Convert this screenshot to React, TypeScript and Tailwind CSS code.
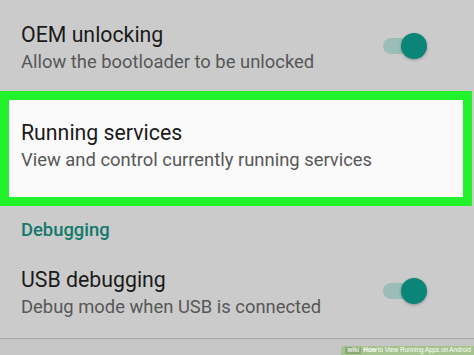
import React from "react";

function Toggle() {
  return (
    <div className="relative h-[26px] w-[45px] shrink-0">
      <div className="absolute left-0 top-[5px] h-[16px] w-[36px] rounded-full bg-[#9bbdb7]" />
      <div className="absolute left-[18px] top-0 h-[26px] w-[26px] rounded-full bg-[#0b8577] shadow-[0_1px_3px_rgba(0,0,0,0.3)]" />
    </div>
  );
}

function Row({ title, subtitle, toggle }: { title: string; subtitle: string; toggle?: boolean }) {
  return (
    <div className="flex items-start justify-between">
      <div className="flex flex-col gap-[1px]">
        <p className="text-[21.3px] leading-[26px] text-[#1b1b1b]">{title}</p>
        <p className="text-[18.4px] leading-[26px] text-[#575757]">{subtitle}</p>
      </div>
      {toggle && <div className="mr-[46px] mt-[11px]"><Toggle /></div>}
    </div>
  );
}

export default function App() {
  return (
    <div
      className="flex h-[355px] w-[474px] flex-col overflow-hidden bg-[#cbcbcb]"
      style={{ fontFamily: "Roboto, 'Noto Sans', sans-serif" }}
    >
      {/* OEM unlocking */}
      <div className="h-[91px] pl-[21px] pt-[22px]">
        <Row title="OEM unlocking" subtitle="Allow the bootloader to be unlocked" toggle />
      </div>

      {/* Highlighted: Running services */}
      <div className="mr-[2px] h-[115px] border-[9px] border-[#22f22b] bg-[#fafafa] pl-[12px] pt-[20px]">
        <Row title="Running services" subtitle="View and control currently running services" />
      </div>

      {/* Section header */}
      <div className="h-[48px] pl-[21px] pt-[12px]">
        <p className="text-[18.4px] font-medium leading-[24px] text-[#12796b]">Debugging</p>
      </div>

      {/* USB debugging */}
      <div className="h-[84px] pl-[21px] pt-[13px]">
        <Row title="USB debugging" subtitle="Debug mode when USB is connected" toggle />
      </div>

      <div className="h-px bg-[#a8a8a8]" />

      <div className="flex flex-1 items-end justify-end bg-[#c6c6c6]">
        <div className="flex h-[9px] items-center gap-[2px] rounded-tl-[3px] bg-[#a5c38e] pl-[4px] pr-[3px] text-[6.3px] leading-none text-white" style={{ fontFamily: "'Liberation Sans', sans-serif" }}>
          <span className="bg-[#8aa877] px-[2px] font-bold text-[#e8f0e0]">wiki</span>
          <span className="font-bold">How</span>
          <span className="-ml-[1px]">to View Running Apps on Android</span>
        </div>
      </div>
    </div>
  );
}
